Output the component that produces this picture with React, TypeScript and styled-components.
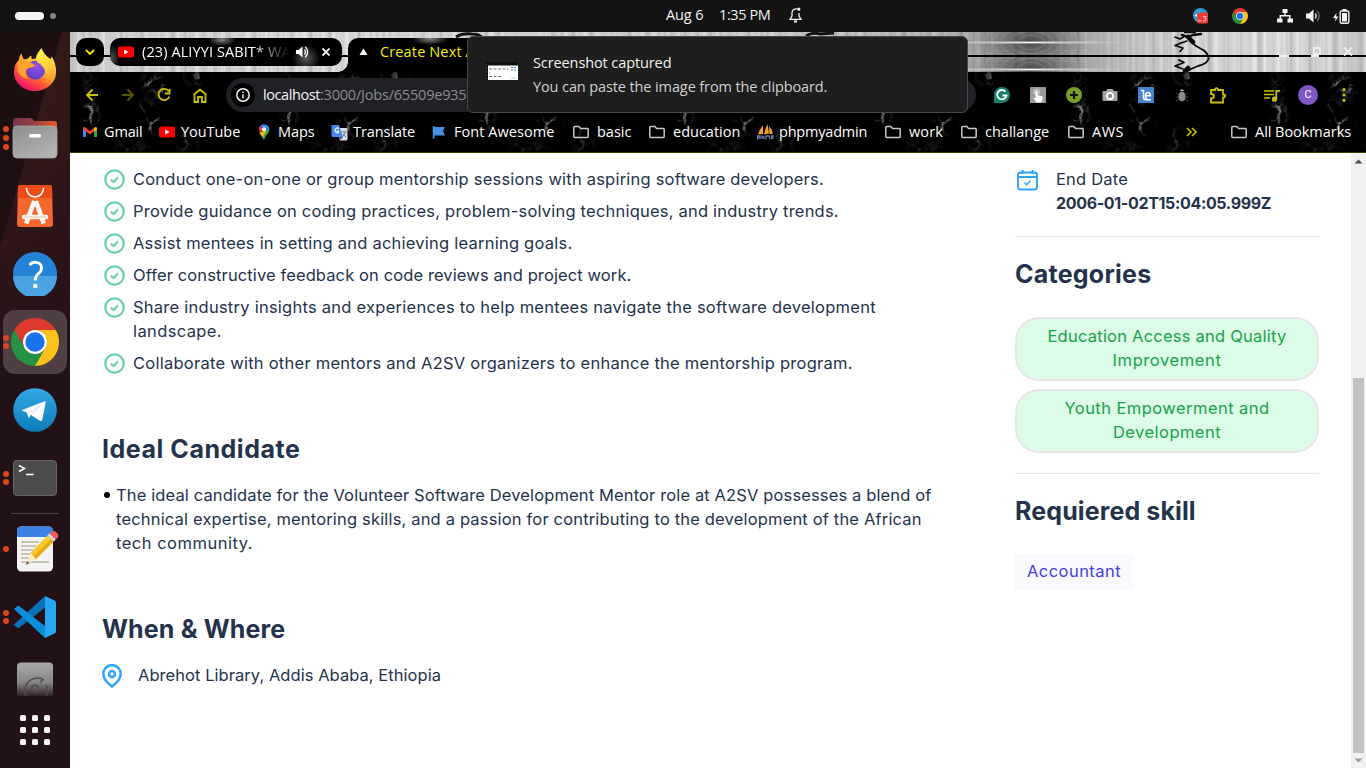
import React from 'react';
import styled, { createGlobalStyle } from 'styled-components';

const UI = '"Open Sans", "Noto Sans", sans-serif';
const BODY = 'Inter, "Open Sans", sans-serif';
const YELLOW = '#c9c000';

const GlobalStyle = createGlobalStyle`
  *, *::before, *::after { box-sizing: border-box; }
  body { margin: 0; overflow: hidden; background: #131313; }
  ul, p, h2 { margin: 0; padding: 0; }
  svg { display: block; flex: none; }
`;

const Desktop = styled.div`
  width: 1366px;
  height: 768px;
  display: flex;
  flex-direction: column;
  position: relative;
  overflow: hidden;
  font-family: ${UI};
`;

/* ---------- system bar ---------- */

const SystemBar = styled.header`
  flex: none;
  height: 32px;
  display: flex;
  align-items: center;
  background: #131313;
  color: #f2f2f2;
  font-size: 14.5px;
`;
const Workspaces = styled.div`
  display: flex;
  align-items: center;
  gap: 6px;
  width: 666px;
  padding-left: 15px;
`;
const ActiveWorkspace = styled.span`
  width: 29px;
  height: 8px;
  border-radius: 4px;
  background: #f4f4f4;
`;
const IdleWorkspace = styled.span`
  width: 6px;
  height: 6px;
  border-radius: 50%;
  background: #858585;
`;
const Clock = styled.div`
  display: flex;
  align-items: center;
  width: 527px;
  line-height: 20px;
  padding-bottom: 2px;
`;
const ClockPart = styled.span<{ $width: number; $track: number }>`
  width: ${p => p.$width}px;
  letter-spacing: ${p => p.$track}px;
  white-space: nowrap;
`;
const Tray = styled.div`
  display: flex;
  align-items: center;
`;
const TrayItem = styled.span<{ $after: number }>`
  display: flex;
  margin-right: ${p => p.$after}px;
`;

/* ---------- dock ---------- */

const Workarea = styled.div`
  flex: 1;
  display: flex;
  min-height: 0;
`;
const DockPanel = styled.nav`
  flex: none;
  width: 70px;
  display: flex;
  flex-direction: column;
  padding-top: 4px;
  background:
    linear-gradient(180deg, rgba(35, 17, 24, 0) 0, rgba(35, 17, 24, 0) 90px, #231118 380px),
    linear-gradient(106deg, #1b0f10 0, #1b0f10 59px, #351919 60px, #2c1517 100%) 0 0 / 70px 300px no-repeat,
    #231118;
`;
const DockSlot = styled.div<{ $height?: number }>`
  position: relative;
  flex: none;
  height: ${p => p.$height ?? 68}px;
  display: flex;
  align-items: center;
  justify-content: center;
`;
const FocusTile = styled.div`
  width: 64px;
  height: 64px;
  border-radius: 12px;
  display: flex;
  align-items: center;
  justify-content: center;
  background: #4f3e42;
`;
const RunningDots = styled.div`
  position: absolute;
  left: 3px;
  top: 0;
  bottom: 0;
  display: flex;
  flex-direction: column;
  justify-content: center;
  gap: 2.7px;
`;
const RunningDot = styled.i`
  width: 6px;
  height: 6px;
  border-radius: 50%;
  background: #d8481a;
`;
const DockRule = styled.div`
  flex: none;
  height: 1px;
  margin: 1px 11px;
  background: #4d4145;
`;
const AppGrid = styled.div`
  margin: 8px auto 0;
  display: grid;
  grid-template-columns: repeat(3, 6px);
  grid-auto-rows: 6px;
  gap: 6px;
`;
const AppGridCell = styled.i`
  background: #f5f3f4;
  border-radius: 1.5px;
`;

/* ---------- browser chrome ---------- */

const Browser = styled.section`
  flex: 1;
  min-width: 0;
  display: flex;
  flex-direction: column;
`;
const BrowserHead = styled.div`
  position: relative;
  flex: none;
  height: 121px;
  background: #000;
  border-bottom: 1px solid #3c3a00;
  color: #fff;
  font-size: 14.5px;
`;
const Backdrop = styled.div`
  position: absolute;
  inset: 0;
`;
const HeadRows = styled.div`
  position: relative;
`;
const TabStrip = styled.div`
  height: 40px;
  display: flex;
  padding: 6px 13px 0 6px;
`;
const TabSearch = styled.div`
  width: 28px;
  height: 28px;
  border-radius: 10px;
  margin-right: 6px;
  display: flex;
  align-items: center;
  justify-content: center;
  background: #000;
`;
const Tab = styled.div`
  width: 232px;
  height: 28px;
  border-radius: 10px;
  display: flex;
  align-items: center;
  padding-left: 8px;
  background:
    radial-gradient(ellipse 14px 6px at 112px 2px, rgba(255, 255, 255, 0.5), transparent),
    radial-gradient(ellipse 14px 14px at 196px 20px, rgba(255, 255, 255, 0.35), transparent),
    radial-gradient(ellipse 8px 14px at 2px 20px, rgba(255, 255, 255, 0.3), transparent),
    #000;
`;
const TabTitle = styled.span<{ $width: number; $track: number }>`
  width: ${p => p.$width}px;
  margin: 0 6px 0 8px;
  white-space: nowrap;
  letter-spacing: ${p => p.$track}px;
  line-height: 20px;
  -webkit-mask-image: linear-gradient(90deg, #000 74%, transparent 100%);
`;
const TabClose = styled.span`
  margin-left: 13px;
`;
const ActiveTab = styled.div`
  position: relative;
  width: 240px;
  height: 34px;
  margin-left: 6px;
  border-radius: 10px 10px 0 0;
  display: flex;
  padding: 4px 0 0 11px;
  color: #f4f000;
  line-height: 20px;
  letter-spacing: 0.14px;
  white-space: nowrap;
  background: radial-gradient(ellipse 18px 6px at 82px 1px, rgba(255, 255, 255, 0.5), transparent), #000;
  &::before {
    content: '';
    position: absolute;
    left: -10px;
    bottom: 0;
    width: 10px;
    height: 10px;
    background: radial-gradient(circle at 0 0, transparent 9.5px, #000 10px);
  }
`;
const TabMark = styled.span`
  width: 21px;
  padding-top: 6px;
`;
const WindowButtons = styled.div`
  margin-left: auto;
  display: flex;
  gap: 22px;
  padding-top: 8px;
`;
const Toolbar = styled.div`
  height: 46px;
  display: flex;
  align-items: center;
  padding-left: 4px;
`;
const ToolSlot = styled.span<{ $before?: number }>`
  width: 36px;
  margin-left: ${p => p.$before ?? 0}px;
  display: flex;
  justify-content: center;
`;
const Omnibox = styled.div`
  width: 750px;
  height: 34px;
  margin: 0 8px;
  border-radius: 17px;
  background: #202126;
  display: flex;
  align-items: center;
  padding-left: 5px;
`;
const SiteInfo = styled.span`
  width: 24px;
  height: 24px;
  border-radius: 50%;
  background: #000;
  margin-right: 8px;
  display: flex;
  align-items: center;
  justify-content: center;
`;
const UrlPart = styled.span<{ $dim?: boolean; $track: number }>`
  color: ${p => (p.$dim ? '#8b8c90' : '#f4f4f4')};
  letter-spacing: ${p => p.$track}px;
  padding-bottom: 1px;
`;
const Avatar = styled.span`
  width: 20px;
  height: 20px;
  border-radius: 50%;
  background: #7e57c2;
  color: #fff;
  font: 11px/20px Roboto, sans-serif;
  text-align: center;
`;
const BookmarkBar = styled.div`
  height: 34px;
  display: flex;
  align-items: center;
  padding: 0 0 6px 12px;
`;
const Bookmark = styled.span<{ $width: number; $icon: number; $track: number }>`
  flex: none;
  width: ${p => p.$width}px;
  display: grid;
  grid-template-columns: ${p => p.$icon}px auto;
  align-items: center;
  line-height: 20px;
  letter-spacing: ${p => p.$track}px;
  white-space: nowrap;
`;

/* ---------- notification ---------- */

const Toast = styled.aside`
  position: absolute;
  left: 467px;
  top: 36px;
  width: 501px;
  height: 77px;
  border: 1px solid #484848;
  border-radius: 6px;
  background: #1e1e1e;
  display: flex;
  align-items: flex-start;
  padding: 14px 0 0 18px;
  gap: 15px;
  font-size: 14.5px;
  line-height: 24px;
  svg { margin-top: 11px; }
`;
const ToastTitle = styled.div`
  color: #f0f0f0;
  letter-spacing: -0.1px;
`;
const ToastText = styled.div`
  color: #d0d0d0;
  letter-spacing: -0.11px;
`;

/* ---------- page ---------- */

const Viewport = styled.div`
  flex: 1;
  min-height: 0;
  display: flex;
  background: #fff;
  font-family: ${BODY};
  font-size: 16.5px;
  line-height: 24px;
  color: #25324b;
`;
const Page = styled.main`
  width: 1281px;
  display: flex;
  padding: 14px 32px 0;
`;
const Article = styled.article`
  width: 913px;
`;
const Heading = styled.h2<{ $track: number; $top: number }>`
  margin-top: ${p => p.$top}px;
  padding-bottom: 1px;
  font-size: 25px;
  line-height: 32px;
  font-weight: 700;
  letter-spacing: ${p => p.$track}px;
`;
const TaskList = styled.ul`
  list-style: none;
  display: flex;
  flex-direction: column;
  gap: 8px;
`;
const Task = styled.li`
  display: flex;
  gap: 8px;
  padding-left: 2px;
  svg { margin-top: 2px; }
`;
const Line = styled.span<{ $track: number }>`
  display: block;
  white-space: nowrap;
  letter-spacing: ${p => p.$track}px;
`;
const Candidate = styled.div`
  display: flex;
  margin-top: 17px;
`;
const Bullet = styled.i`
  width: 6px;
  height: 6px;
  margin: 9px 6px 0 2px;
  border-radius: 50%;
  background: #000;
`;
const Place = styled.div`
  display: flex;
  gap: 16px;
  margin-top: 17px;
  svg { margin-top: 1px; }
`;
const Sidebar = styled.aside`
  width: 304px;
`;
const DateRow = styled.div`
  display: flex;
  gap: 17px;
  padding: 0 0 21px 1px;
  border-bottom: 1px solid #e5e7eb;
  svg { margin-top: 1px; }
`;
const Strong = styled(Line)`
  font-size: 16px;
  font-weight: 700;
`;
const Categories = styled.div`
  display: flex;
  flex-direction: column;
  gap: 8px;
  margin-top: 26px;
  padding-bottom: 20px;
  border-bottom: 1px solid #e5e7eb;
`;
const Pill = styled.div`
  padding: 5px 0 7px;
  border: 2px solid #e5e7eb;
  border-radius: 24px;
  background: #dcfce7;
  color: #16a34a;
  text-align: center;
`;
const Skill = styled.span`
  display: inline-block;
  width: 118px;
  margin-top: 26px;
  padding: 5px 12px 7px;
  background: #f8f8fd;
  color: #4640de;
`;
const Scrollbar = styled.div`
  width: 15px;
  background: #f1f1f1;
  display: flex;
  flex-direction: column;
  align-items: center;
  padding: 6px 1px 5px 0;
`;
const Thumb = styled.div`
  width: 11px;
  height: 375px;
  margin: 214px 0 5px;
  background: #c1c1c1;
`;

/* ---------- icons ---------- */

const ChromeIcon = ({ size }: { size: number }) => (
  <svg width={size} height={size} viewBox="0 0 48 48">
    <path fill="#db3a2d" d="M24 12H44.78A24 24 0 0 0 3.22 12L13.6 30A12 12 0 0 1 24 12Z" />
    <path fill="#259343" d="M34.39 30L24 48A24 24 0 0 1 3.22 12L13.6 30A12 12 0 0 0 34.39 30Z" />
    <path fill="#fcc21b" d="M24 12H44.78A24 24 0 0 1 24 48L34.39 30A12 12 0 0 0 24 12Z" />
    <circle cx="24" cy="24" r="12" fill="#fff" />
    <circle cx="24" cy="24" r="9.7" fill="#1a73e8" />
  </svg>
);

const YouTubeIcon = () => (
  <svg width="16" height="16" viewBox="0 0 16 16">
    <rect y="2.5" width="16" height="11" rx="2.6" fill="#f00" />
    <path d="M6.2 5.6v4.8L10.5 8z" fill="#fff" />
  </svg>
);

const FolderIcon = () => (
  <svg width="16" height="14" viewBox="0 0 16 14" fill="none" stroke="#c8c8c8" strokeWidth="1.5">
    <path d="M1.6 1.6H5.8L7.6 3.6H14.4Q15.2 3.6 15.2 4.4V11.6Q15.2 12.4 14.4 12.4H1.6Q.8 12.4.8 11.6V2.4Q.8 1.6 1.6 1.6Z" />
  </svg>
);

const FirefoxIcon = () => (
  <svg width="44" height="44" viewBox="0 0 44 44">
    <defs>
      <linearGradient id="ffBody" x1=".8" y1=".1" x2=".25" y2=".95">
        <stop offset="0" stopColor="#fff14a" />
        <stop offset=".38" stopColor="#ffb02e" />
        <stop offset=".65" stopColor="#ff5a36" />
        <stop offset="1" stopColor="#ee0f70" />
      </linearGradient>
      <radialGradient id="ffGlobe" cx=".55" cy=".3" r=".8">
        <stop offset="0" stopColor="#a04de8" />
        <stop offset=".6" stopColor="#6f45d4" />
        <stop offset="1" stopColor="#4f3bb5" />
      </radialGradient>
      <linearGradient id="ffTail" x1=".5" y1="0" x2=".6" y2="1">
        <stop offset="0" stopColor="#fff44f" />
        <stop offset=".6" stopColor="#ffc83a" />
        <stop offset="1" stopColor="#ff8a2c" />
      </linearGradient>
    </defs>
    <path fill="url(#ffBody)" d="M6 12Q6 8 8.500 5.500Q9 9.500 11 11.500L15 10.500Q17 8 18.500 7.500Q18 10 19 11L32 9Q43 13 43 25A21 18.500 0 0 1 1 24Q1 16 6 12Z" />
    <circle cx="22.5" cy="22" r="9.5" fill="url(#ffGlobe)" />
    <path fill="url(#ffTail)" d="M28.500 0Q31 7 37.500 11Q39 9 38.500 8Q43 15 43 24Q41 33 32 35Q35 29 32 23Q30 17 24.500 14.500Q20 10 28.500 0Z" />
    <path fill="#ffa22c" d="M6 12Q6 8 8.500 5.500Q9 9.500 11 12Q15 12.500 18 14.500L22.500 17.500Q20 19.500 16 20Q12.500 21 12.500 25Q13 29 16 31.500Q8 30 5 24Q4 17 6 12Z" />
  </svg>
);

const FilesIcon = () => (
  <svg width="46" height="42" viewBox="0 0 46 42">
    <defs>
      <linearGradient id="fdBack"><stop offset="0" stopColor="#76304f" /><stop offset=".5" stopColor="#97403f" /><stop offset="1" stopColor="#e9591f" /></linearGradient>
      <linearGradient id="fdFront" y2="1" x2=".7"><stop offset="0" stopColor="#8d8d8d" /><stop offset="1" stopColor="#b3b3b3" /></linearGradient>
    </defs>
    <path fill="url(#fdBack)" d="M1 4Q1 1 4 1H18Q20 1 21 2.500L22 4H42Q45 4 45 7V20H1Z" />
    <rect x="1" y="9" width="44" height="32" rx="4" fill="url(#fdFront)" stroke="#a9a9a9" strokeWidth=".8" />
    <rect x="17" y="17" width="12" height="3.5" rx="1.5" fill="#fff" />
  </svg>
);

const SoftwareIcon = () => (
  <svg width="36" height="42" viewBox="0 0 36 42">
    <path fill="#f4672f" d="M3.500 0H32.500Q35 0 35 2.500L36 39Q36 42 33 42H3Q0 42 0 39L1 2.500Q1 0 3.500 0Z" />
    <path fill="#ed4b17" d="M3.500 0H32.500Q35 0 35 2.500L35.300 13H.7L1 2.500Q1 0 3.500 0Z" />
    <path d="M9.500 3A8.500 9 0 0 0 26.500 3" fill="none" stroke="#fff" strokeWidth="1.5" />
    <g stroke="#fff8f4" fill="none">
      <path d="M17.300 16L9.200 38.500M18.800 16L26.800 38.500" strokeWidth="4.6" />
      <path d="M7 32H29" strokeWidth="4.5" strokeLinecap="round" />
      <path d="M7 32H29" strokeWidth="1" stroke="#f4b8a0" />
    </g>
  </svg>
);

const HelpIcon = () => (
  <svg width="44" height="44" viewBox="0 0 44 44">
    <circle cx="22" cy="22" r="22" fill="#2383d6" />
    <path d="M0 24A22 22 0 0 0 44 24Z" fill="#4aa3e2" />
    <path d="M16.500 13Q19 10 23 10.300Q28.500 11 28.500 16Q28.500 19.500 25 22Q22 24.500 22.300 28.500" fill="none" stroke="#fff" strokeWidth="2.8" />
    <circle cx="22.3" cy="34" r="2.3" fill="#fff" />
  </svg>
);

const TelegramIcon = ({ size }: { size: number }) => (
  <svg width={size} height={size} viewBox="0 0 44 44">
    <defs><linearGradient id="tg" x2="0" y2="1"><stop offset="0" stopColor="#34a8e4" /><stop offset="1" stopColor="#0c7dba" /></linearGradient></defs>
    <circle cx="22" cy="22" r="21.8" fill="url(#tg)" />
    <path fill="#fff" d="M8.500 22.300L31 13.400Q33 13 32.600 15L29.300 31.500Q28.800 33.800 26.800 32.800L17.600 26.800L16 30.500L13.800 24.600Z" />
    <path d="M15.500 25L28 17L18.500 26.500" fill="none" stroke="#c9dff0" strokeWidth=".8" />
  </svg>
);

const TerminalIcon = () => (
  <svg width="44" height="36" viewBox="0 0 44 36">
    <rect x=".5" y=".5" width="43" height="35" rx="3.5" fill="#4c4c4c" stroke="#666" />
    <path d="M6 5.500L11.500 8.500L6 11.500M13 14.500H20.500" fill="none" stroke="#fff" strokeWidth="1.5" />
  </svg>
);

const EditorIcon = () => (
  <svg width="46" height="46" viewBox="-1 0 46 46" overflow="visible">
    <rect x="4" y=".5" width="36" height="45" rx="4.5" fill="#f3f3f2" />
    <path fill="#3a82e4" d="M4 5Q4 .5 8.500 .5H35.500Q40 .5 40 5V11H4Z" />
    <path d="M8 16H26M8 20H23M8 24H20M8 28H18M8 32H16M8 36H36" stroke="#c8c4b8" strokeWidth="1.9" />
    <path fill="#f9c62c" d="M36 8L42 14L22 34L16 28.500Z" />
    <path fill="#e5ac12" d="M39.500 11.500L42 14L22 34L19.500 31.500Z" />
    <path fill="#ffefc4" d="M17.500 27L23 33L13 38.500Z" />
    <path fill="#555" d="M14.500 35L16.500 37L12.500 39Z" />
    <path fill="#f25c62" d="M36 8Q40 3 43.500 6.500Q48 10 42 14Z" />
    <path fill="#cfd6da" d="M34.500 9.500L36.500 7.500L42.500 13.500L40.500 15.500Z" />
  </svg>
);

const VsCodeIcon = () => (
  <svg width="42" height="42" viewBox="0 0 42 42">
    <path fill="#0872b8" d="M0 28.500L31 0V11.500L5 32Q4 32.500 3 31.600L.3 29.500Z" />
    <path fill="#0a8fdb" d="M0 13L3.500 10Q4.500 9.500 5.500 10.300L31 30V42Z" />
    <path fill="#27a6f2" d="M31 0L40.500 4.500Q42 5.300 42 7V35Q42 36.700 40.500 37.500L31 42Z" />
  </svg>
);

const DiskIcon = () => (
  <svg width="36" height="34" viewBox="0 0 36 34">
    <defs><linearGradient id="dk" x2="0" y2="1"><stop offset="0" stopColor="#aaa" /><stop offset=".6" stopColor="#858585" /><stop offset="1" stopColor="#2f2125" /></linearGradient></defs>
    <path fill="url(#dk)" d="M0 34V4Q0 .5 4 .5H32Q36 .5 36 4V34Z" />
    <g fill="none" stroke="#514b4d" strokeWidth="1.5">
      <path d="M9 34A12.500 12.500 0 0 1 26 17.500L23 20.500M29 23Q32 28 29 34" />
      <circle cx="18" cy="26.5" r="3.3" />
    </g>
  </svg>
);

const CheckIcon = () => (
  <svg width="21" height="21" viewBox="0 0 21 21" fill="none" stroke="#69cfac">
    <circle cx="10.5" cy="10.5" r="9.2" strokeWidth="2.2" />
    <path d="M6.800 10.500L9.500 13L14.200 8.300" strokeWidth="2.2" />
  </svg>
);

const PinIcon = () => (
  <svg width="20" height="24" viewBox="0 0 20 24" fill="none" stroke="#2fa4f7" strokeWidth="2.5">
    <path d="M10 22.500Q1.300 16 1.300 9.700A8.700 8.500 0 0 1 18.700 9.700Q18.700 16 10 22.500Z" />
    <circle cx="10" cy="10" r="3" />
  </svg>
);

const CalendarIcon = () => (
  <svg width="23" height="24" viewBox="0 0 23 24" fill="none" stroke="#2fa4f7" strokeWidth="1.9">
    <rect x="2" y="4.5" width="19" height="17" rx="2.5" />
    <path d="M2 9H21M6.500 2V6M16.500 2V6" />
    <path d="M8.500 14.500L10.700 16.700L14.500 12.700" strokeWidth="1.6" />
  </svg>
);

const Smoke = () => (
  <svg width="1296" height="120" viewBox="0 0 1296 120">
    <defs>
      <filter id="wisp" filterUnits="userSpaceOnUse" x="0" y="0" width="198" height="125" colorInterpolationFilters="sRGB">
        <feGaussianBlur in="SourceGraphic" stdDeviation="3.5" result="soft" />
        <feTurbulence type="turbulence" baseFrequency=".07" numOctaves="5" seed="4" />
        <feColorMatrix values="0 0 0 0 1  0 0 0 0 1  0 0 0 0 1  -3.2 0 0 0 1" result="veins" />
        <feComposite in="veins" in2="soft" operator="in" />
        <feGaussianBlur stdDeviation=".5" />
      </filter>
      <pattern id="smoke" width="198" height="125" patternUnits="userSpaceOnUse" y="32">
        <g filter="url(#wisp)" fill="#fff">
          <ellipse cx="20" cy="20" rx="4" ry="12" opacity=".3" />
          <ellipse cx="21" cy="50" rx="4.5" ry="13" />
          <ellipse cx="82" cy="19" rx="9" ry="6" opacity=".75" />
          <ellipse cx="91" cy="27" rx="5" ry="6" opacity=".6" />
          <ellipse cx="83" cy="61" rx="10" ry="7" opacity=".75" />
          <ellipse cx="126" cy="10" rx="10" ry="9" opacity=".6" />
          <ellipse cx="76" cy="43" rx="6" ry="8" opacity=".35" />
          <ellipse cx="118" cy="78" rx="9" ry="14" opacity=".25" />
          <ellipse cx="62" cy="84" rx="18" ry="4" opacity=".25" />
        </g>
      </pattern>
    </defs>
    <rect y="40" width="1296" height="80" fill="url(#smoke)" />
  </svg>
);

const Figure = () => (
  <g fill="none" stroke="#0a0a0a" strokeLinecap="round" strokeLinejoin="round">
    <path d="M1112 3L1118 5L1123 3L1131 2M1115 0L1125 0" strokeWidth="2.4" />
    <path d="M1105 5L1110 7L1115 4M1117 9L1111 11L1105 13.500L1113 16L1110 19.500" strokeWidth="1.6" />
    <path d="M1120 9L1126 14L1134 18.500Q1139 23 1138.500 27Q1137 32 1128 34L1121 37L1116 40" strokeWidth="1.8" />
    <path d="M1118 5L1123 10M1118 36L1115 39" strokeWidth="4.5" />
    <path d="M1109 28L1114 30.500L1105 34L1113 37" strokeWidth="1.8" />
  </g>
);

const BrushedMetal = () => (
  <svg width="1296" height="40" viewBox="0 0 1296 40">
    <defs>
      <linearGradient id="steel">
        <stop offset="0" stopColor="#dadada" />
        <stop offset=".2" stopColor="#e4e4e4" />
        <stop offset=".55" stopColor="#d4d4d4" />
        <stop offset=".67" stopColor="#bcbcbc" />
        <stop offset=".74" stopColor="#979797" />
        <stop offset=".81" stopColor="#c8c8c8" />
        <stop offset=".87" stopColor="#e0e0e0" />
        <stop offset=".93" stopColor="#e6e6e6" />
        <stop offset="1" stopColor="#d6d6d6" />
      </linearGradient>
      <filter id="brush" x="0" y="0" width="100%" height="100%" colorInterpolationFilters="sRGB">
        <feTurbulence type="fractalNoise" baseFrequency=".16 .0005" numOctaves="3" seed="7" />
        <feColorMatrix values="0 0 0 0 0  0 0 0 0 0  0 0 0 0 0  .42 0 0 0 -.14" />
      </filter>
      <radialGradient id="core"><stop offset="0" stopColor="#333" stopOpacity=".75" /><stop offset="1" stopColor="#555" stopOpacity="0" /></radialGradient>
      <radialGradient id="glint"><stop offset="0" stopColor="#fff" /><stop offset=".3" stopColor="#fff" stopOpacity=".6" /><stop offset="1" stopColor="#fff" stopOpacity="0" /></radialGradient>
      <clipPath id="upper"><rect width="1296" height="23" /></clipPath>
      <clipPath id="lower"><rect y="25" width="1296" height="15" /></clipPath>
    </defs>
    <rect width="1296" height="40" fill="url(#steel)" />
    <rect width="1296" height="40" filter="url(#brush)" />
    {[{ clip: 'upper', y: 10.5 }, { clip: 'lower', y: 37.5 }].map(({ clip, y }) => (
      <g key={clip} clipPath={`url(#${clip})`}>
        <ellipse cx="961" cy={y} rx="62" ry="26" fill="url(#core)" />
        {[14, 22, 30, 38, 47, 56, 66, 76, 88, 100].map(r => (
          <ellipse key={r} cx="961" cy={y} rx={r} ry={r * 0.5} fill="none" stroke="#eee" strokeWidth="1" opacity=".16" />
        ))}
        <ellipse cx="961" cy={y} rx="100" ry="1.8" fill="url(#glint)" />
      </g>
    ))}
    <rect y="23" width="1296" height="2" fill="#000" />
    <Figure />
    <path d="M386 5Q392 1 402 2Q410 2 412 6M736 4Q742 0 750 2L764 1" fill="none" stroke="#111" strokeWidth="3" />
  </svg>
);

/* ---------- data ---------- */

const tasks: { text: string; track: number }[][] = [
  [{ text: 'Conduct one-on-one or group mentorship sessions with aspiring software developers.', track: 0.21 }],
  [{ text: 'Provide guidance on coding practices, problem-solving techniques, and industry trends.', track: 0.21 }],
  [{ text: 'Assist mentees in setting and achieving learning goals.', track: 0.23 }],
  [{ text: 'Offer constructive feedback on code reviews and project work.', track: 0.11 }],
  [
    { text: 'Share industry insights and experiences to help mentees navigate the software development', track: 0.25 },
    { text: 'landscape.', track: 0.38 },
  ],
  [{ text: 'Collaborate with other mentors and A2SV organizers to enhance the mentorship program.', track: 0.25 }],
];

const GmailIcon = () => (
  <svg width="16" height="16" viewBox="0 0 16 16">
    <path fill="#4285f4" d="M1 4V13H4V7L1 4Z" />
    <path fill="#34a853" d="M15 4V13H12V7L15 4Z" />
    <path fill="#ea4335" d="M1 4Q2 2 4 4L8 7L12 4V7.500L8 10.600L4 7.500L1 5Z" />
    <path fill="#fbbc04" d="M12 4Q14 2 15 4V5.500L12 7.600Z" />
  </svg>
);
const MapsIcon = () => (
  <svg width="16" height="16" viewBox="0 0 16 16">
    <path fill="#34a853" d="M3.500 9L8 16Q9 12 12 9.500Q14 7 13 3.500Z" />
    <path fill="#fbbc04" d="M3.200 8.500L10 7L7 13.500Q5 11 3.200 8.500Z" />
    <path fill="#ea4335" d="M4 2L8 5L5 9Q1.500 5 4 2Z" />
    <path fill="#4285f4" d="M4 2Q8-1.500 12 2Q14 4 13 6L9 5Z" />
    <circle cx="8" cy="5.3" r="2" fill="#fff" />
  </svg>
);
const TranslateIcon = () => (
  <svg width="17" height="17" viewBox="0 0 17 17">
    <path fill="#d9dce0" d="M6 4H15.500L16.500 5V15.500L15.500 16.500H9Z" />
    <path fill="#4a89f3" d="M.5 1H8L12 13H1.500L.5 12Z" />
    <path d="M8 4.500A2.400 2.400 0 1 0 7.500 8.500V7H5.500" fill="none" stroke="#fff" strokeWidth="1.1" />
    <path d="M10.500 8H15.500M13 7V8M11 13Q14 11 14.500 8M12 10L15 13" fill="none" stroke="#65788a" strokeWidth=".9" />
    <path fill="#3256b4" d="M8.500 13H12L9.500 16Z" />
  </svg>
);
const FlagIcon = () => (
  <svg width="14" height="14" viewBox="0 0 14 14">
    <path fill="#4a90e2" d="M.7 1H2.500V2H13L11 6L13 10.500H2.500V13.500H.7Z" />
  </svg>
);
const SailIcon = () => (
  <svg width="17" height="16" viewBox="0 0 17 16">
    <path fill="#f89c2a" d="M6 1Q2 6 1 10.500L6 10ZM10.500 0Q8 5 7 10.500L12 9.500ZM12 2Q16 6 15.500 10L12.500 10Z" />
    <path d="M.5 15.500V12H3V14H.5M5 15V11.500M5 13H7V15M9 15.500V12H12L13 15M14.500 15V12H16V15" fill="none" stroke="#6c78af" strokeWidth="1.3" />
  </svg>
);
const MoreIcon = () => (
  <svg width="11" height="10" viewBox="0 0 11 10" fill="none" stroke={YELLOW} strokeWidth="1.6">
    <path d="M1 1L5 5L1 9M6 1L10 5L6 9" />
  </svg>
);

const bookmarks: { name: string; icon: React.ReactNode; width: number; gutter: number; track: number }[] = [
  { name: 'Gmail', icon: <GmailIcon />, width: 77, gutter: 22, track: -0.15 },
  { name: 'YouTube', icon: <YouTubeIcon />, width: 97, gutter: 22, track: -0.05 },
  { name: 'Maps', icon: <MapsIcon />, width: 75, gutter: 22, track: -0.1 },
  { name: 'Translate', icon: <TranslateIcon />, width: 101, gutter: 22, track: -0.07 },
  { name: 'Font Awesome', icon: <FlagIcon />, width: 141, gutter: 22, track: 0.05 },
  { name: 'basic', icon: <FolderIcon />, width: 76, gutter: 24, track: 0 },
  { name: 'education', icon: <FolderIcon />, width: 108, gutter: 24, track: 0 },
  { name: 'phpmyadmin', icon: <SailIcon />, width: 128, gutter: 22, track: -0.2 },
  { name: 'work', icon: <FolderIcon />, width: 76, gutter: 24, track: 0.1 },
  { name: 'challange', icon: <FolderIcon />, width: 107, gutter: 24, track: 0 },
  { name: 'AWS', icon: <FolderIcon />, width: 118, gutter: 24, track: 0.5 },
  { name: '', icon: <MoreIcon />, width: 45, gutter: 24, track: 0 },
  { name: 'All Bookmarks', icon: <FolderIcon />, width: 130, gutter: 24, track: -0.04 },
];

const Running = ({ count }: { count: number }) => (
  <RunningDots>{Array.from({ length: count }, (_, i) => <RunningDot key={i} />)}</RunningDots>
);

const Dock = () => (
  <DockPanel>
    <DockSlot><FirefoxIcon /></DockSlot>
    <DockSlot><Running count={3} /><FilesIcon /></DockSlot>
    <DockSlot><SoftwareIcon /></DockSlot>
    <DockSlot><HelpIcon /></DockSlot>
    <DockSlot><FocusTile><ChromeIcon size={48} /></FocusTile><Running count={2} /></DockSlot>
    <DockSlot><TelegramIcon size={44} /></DockSlot>
    <DockSlot><Running count={2} /><TerminalIcon /></DockSlot>
    <DockRule />
    <DockSlot><Running count={1} /><EditorIcon /></DockSlot>
    <DockSlot><Running count={2} /><VsCodeIcon /></DockSlot>
    <DockSlot $height={56}><DiskIcon /></DockSlot>
    <AppGrid>{Array.from({ length: 9 }, (_, i) => <AppGridCell key={i} />)}</AppGrid>
  </DockPanel>
);

const line = { fill: 'none', stroke: YELLOW, strokeWidth: 1.8 };

const BrowserToolbar = () => (
  <Toolbar>
    <ToolSlot><svg width="14" height="14" viewBox="0 0 14 14" {...line}><path d="M13 7H2M7.500 1.500L2 7L7.500 12.500" /></svg></ToolSlot>
    <ToolSlot><svg width="14" height="14" viewBox="0 0 14 14" {...line} stroke="#5a5600"><path d="M1 7H12M6.500 1.500L12 7L6.500 12.500" /></svg></ToolSlot>
    <ToolSlot><svg width="14" height="14" viewBox="0 0 14 14" {...line}><path d="M11.700 3.200A5.600 5.600 0 1 0 12.400 8.500M12.600 .8V5.500H8" /></svg></ToolSlot>
    <ToolSlot><svg width="14" height="15" viewBox="0 0 14 15" {...line}><path d="M1.500 6L7 1.700L12.500 6V14H9V9H5V14H1.500Z" /></svg></ToolSlot>
    <Omnibox>
      <SiteInfo>
        <svg width="14" height="14" viewBox="0 0 14 14" fill="none" stroke="#f1f1f1" strokeWidth="1.5"><circle cx="7" cy="7" r="6.2" /><path d="M7 6.200V10.300M7 3.500V5" /></svg>
      </SiteInfo>
      <UrlPart $track={-0.42}>localhost</UrlPart>
      <UrlPart $dim $track={-0.2}>:3000/Jobs/65509e935</UrlPart>
    </Omnibox>
    <ToolSlot>
      <svg width="16" height="16" viewBox="0 0 16 16"><path fill="#15826c" d="M8 0A8 8 0 0 1 8 16H0V8A8 8 0 0 1 8 0Z" /><path d="M11.500 4.700A4.700 4.700 0 1 0 12.500 8.500H8.500" fill="none" stroke="#fff" strokeWidth="1.8" /></svg>
    </ToolSlot>
    <ToolSlot>
      <svg width="16" height="16" viewBox="0 0 16 16"><rect width="16" height="16" rx="1" fill="#9b9b9b" /><circle cx="6.5" cy="5" r="3.5" fill="#bdbdbd" /><path fill="#fff" d="M5.500 4.500Q6.500 3 7.500 4.500V8L12.500 9.500V13L11 15.500H6.500L3 10.500L5.500 11Z" /></svg>
    </ToolSlot>
    <ToolSlot>
      <svg width="16" height="16" viewBox="0 0 16 16"><circle cx="8" cy="8" r="8" fill="#779e26" /><path d="M8 4V12M4 8H12" stroke="#111" strokeWidth="2.2" /></svg>
    </ToolSlot>
    <ToolSlot>
      <svg width="16" height="14" viewBox="0 0 16 14"><path fill="#a4a4a4" d="M1 3H4L5.500 1H10.500L12 3H15Q15.500 3 15.500 3.500V12Q15.500 13 14.500 13H1.500Q.5 13 .5 12V3.500Q.5 3 1 3Z" /><circle cx="8" cy="8" r="3" fill="none" stroke="#fff" strokeWidth="1.8" /><circle cx="8" cy="8" r="2" fill="#888" /></svg>
    </ToolSlot>
    <ToolSlot>
      <svg width="16" height="16" viewBox="0 0 16 16"><rect width="16" height="16" fill="#4585cf" /><path d="M3 3.500H5.500V10.500Q5.500 12.700 8 12.700H13M8 8.700H12.300Q12.300 5.500 10 5.500Q7.500 5.700 7.500 9Q7.500 12.500 10.500 12.600" fill="none" stroke="#fff" strokeWidth="1.5" /></svg>
    </ToolSlot>
    <ToolSlot>
      <svg width="14" height="14" viewBox="0 0 14 14"><ellipse cx="7" cy="8.5" rx="3.6" ry="5" fill="#8a8a8a" /><path fill="#b0b0b0" d="M4.500 3Q7-.5 9.500 3Z" /><path d="M1 5L4 7M13 5L10 7M.5 9H3.500M13.500 9H10.500M1 13L4 11M13 13L10 11" stroke="#444" /></svg>
    </ToolSlot>
    <ToolSlot>
      <svg width="18" height="17" viewBox="0 0 18 17" {...line}><path d="M2 3H6Q6 1.200 7.500 1.200T9 3H14V7.500Q16.200 7.500 16.200 9T14 10.500V15.500H2V11.500Q5 11.500 5 9.300T2 7Z" /></svg>
    </ToolSlot>
    <ToolSlot $before={18}>
      <svg width="16" height="13" viewBox="0 0 16 13"><path d="M0 2H10M0 5.500H10M0 9H6" stroke={YELLOW} strokeWidth="1.5" /><path d="M12.300 10V1.800H16" fill="none" stroke={YELLOW} strokeWidth="1.8" /><circle cx="10.5" cy="10.2" r="2.6" fill={YELLOW} /></svg>
    </ToolSlot>
    <ToolSlot><Avatar>C</Avatar></ToolSlot>
    <ToolSlot>
      <svg width="4" height="14" viewBox="0 0 4 14" fill={YELLOW}><circle cx="2" cy="1.7" r="1.6" /><circle cx="2" cy="7" r="1.6" /><circle cx="2" cy="12.3" r="1.6" /></svg>
    </ToolSlot>
  </Toolbar>
);

export default function App() {
  return (
    <Desktop>
      <GlobalStyle />
      <SystemBar>
        <Workspaces><ActiveWorkspace /><IdleWorkspace /></Workspaces>
        <Clock>
          <ClockPart $width={53} $track={-0.1}>Aug 6</ClockPart>
          <ClockPart $width={70} $track={-0.4}>1:35 PM</ClockPart>
          <svg width="13" height="16" viewBox="0 0 13 16" fill="none" stroke="#f2f2f2" strokeWidth="1.3">
            <path d="M8 2Q3.200 1.500 3 6V9L1 12.300H12L10 9V6" />
            <circle cx="9.8" cy="2.2" r="1" fill="#f2f2f2" />
            <path d="M5 14.500H8" strokeWidth="2" />
          </svg>
        </Clock>
        <Tray>
          <TrayItem $after={23}>
            <svg width="16" height="16" viewBox="0 0 16 16">
              <circle cx="7.5" cy="7.5" r="7.5" fill="#2b9fda" />
              <path d="M1.500 7.500L4 6V9Z" fill="#fff" />
              <rect x="4" y="4.5" width="11" height="11" rx="2" fill="#f23c34" />
              <path d="M5 12.800H8.500M10 8.500H13L11.500 10.300Q13.500 10.800 13 12.300Q12 13.500 10 12.800" fill="none" stroke="#ffd5d2" strokeWidth=".9" />
            </svg>
          </TrayItem>
          <TrayItem $after={29}><ChromeIcon size={16} /></TrayItem>
          <TrayItem $after={13}>
            <svg width="16" height="14" viewBox="0 0 16 14" fill="#f4f4f4">
              <path d="M5.500 0H10.500V4H8.700V6H13.500V9.500H16V13.500H10.500V9.500H12V7.500H4V9.500H5.500V13.500H0V9.500H2.500V6H7.300V4H5.500Z" />
            </svg>
          </TrayItem>
          <TrayItem $after={12}>
            <svg width="15" height="14" viewBox="0 0 15 14">
              <path fill="#f4f4f4" d="M0 4.500H3L7.500 .5V13.500L3 9.500H0Z" />
              <path d="M9.300 4.500Q11 7 9.300 9.500" stroke="#ddd" strokeWidth="1.4" fill="none" />
              <path d="M11.300 2Q15 7 11.300 12" stroke="#777" strokeWidth="1.2" fill="none" />
            </svg>
          </TrayItem>
          <TrayItem $after={0}>
            <svg width="17" height="15" viewBox="0 0 17 15">
              <path fill="#f4f4f4" d="M3.500 4L0 9H2.500L2 12.500L5.500 7.500H3Z" />
              <rect x="7.2" y="2" width="8.6" height="12.3" rx="1.5" fill="none" stroke="#f4f4f4" strokeWidth="1.4" />
              <rect x="9" y="4" width="5" height="8.5" fill="#f4f4f4" />
              <rect x="9.5" y="0" width="4" height="2" fill="#f4f4f4" />
            </svg>
          </TrayItem>
        </Tray>
      </SystemBar>
      <Workarea>
        <Dock />
        <Browser>
          <BrowserHead>
            <Backdrop><Smoke /></Backdrop>
            <Backdrop><BrushedMetal /></Backdrop>
            <HeadRows>
              <TabStrip>
                <TabSearch>
                  <svg width="10" height="7" viewBox="0 0 10 7" fill="none" stroke="#f4f000" strokeWidth="1.8"><path d="M1 1L5 5L9 1" /></svg>
                </TabSearch>
                <Tab>
                  <YouTubeIcon />
                  <TabTitle $width={148} $track={0.1}>(23) ALIYYI SABIT* WA</TabTitle>
                  <svg width="13" height="12" viewBox="0 0 13 12">
                    <path fill="#fff" d="M0 4H2.500L6.500 .5V11.500L2.500 8H0Z" />
                    <path d="M8.500 3.500Q10.300 6 8.500 8.500M9.300 .8Q14 6 9.300 11.200" stroke="#fff" strokeWidth="1.3" fill="none" />
                  </svg>
                  <TabClose><svg width="8" height="8" viewBox="0 0 8 8" stroke="#fff" strokeWidth="1.8"><path d="M.5 .5L7.500 7.500M7.500 .5L.5 7.500" /></svg></TabClose>
                </Tab>
                <ActiveTab>
                  <TabMark><svg width="9" height="8" viewBox="0 0 9 8"><path d="M4.500 .5L8.500 7H.5Z" fill="#fff" /></svg></TabMark>
                  Create Next App
                </ActiveTab>
                <WindowButtons>
                  <svg width="10" height="12" viewBox="0 0 10 12"><path d="M0 10H10" stroke="#eceef0" strokeWidth="2" /></svg>
                  <svg width="10" height="12" viewBox="0 0 10 12" fill="none" stroke="#eceef0" strokeWidth="2"><path d="M3 2H9V8H3Z" /><path d="M0 10H8" /></svg>
                  <svg width="10" height="12" viewBox="0 0 10 12" stroke="#eceef0" strokeWidth="2"><path d="M1 1.500L9 9.500M9 1.500L1 9.500" /></svg>
                </WindowButtons>
              </TabStrip>
              <BrowserToolbar />
              <BookmarkBar>
                {bookmarks.map((b, i) => (
                  <Bookmark key={i} $width={b.width} $icon={b.gutter} $track={b.track}>{b.icon}{b.name}</Bookmark>
                ))}
              </BookmarkBar>
            </HeadRows>
          </BrowserHead>
          <Viewport>
            <Page>
              <Article>
                <TaskList>
                  {tasks.map((lines, i) => (
                    <Task key={i}>
                      <CheckIcon />
                      <div>{lines.map(l => <Line key={l.text} $track={l.track}>{l.text}</Line>)}</div>
                    </Task>
                  ))}
                </TaskList>
                <Heading $top={58} $track={0.54}>Ideal Candidate</Heading>
                <Candidate>
                  <Bullet />
                  <p>
                    <Line $track={0.13}>The ideal candidate for the Volunteer Software Development Mentor role at A2SV possesses a blend of</Line>
                    <Line $track={0.17}>technical expertise, mentoring skills, and a passion for contributing to the development of the African</Line>
                    <Line $track={0.5}>tech community.</Line>
                  </p>
                </Candidate>
                <Heading $top={58} $track={0.15}>When &amp; Where</Heading>
                <Place><PinIcon /><Line $track={0.05}>Abrehot Library, Addis Ababa, Ethiopia</Line></Place>
              </Article>
              <Sidebar>
                <DateRow>
                  <CalendarIcon />
                  <div>
                    <Line $track={0.2}>End Date</Line>
                    <Strong $track={-0.34}>2006-01-02T15:04:05.999Z</Strong>
                  </div>
                </DateRow>
                <Heading $top={21} $track={0.24}>Categories</Heading>
                <Categories>
                  <Pill><Line $track={0.23}>Education Access and Quality</Line><Line $track={0.6}>Improvement</Line></Pill>
                  <Pill><Line $track={0.45}>Youth Empowerment and</Line><Line $track={0.46}>Development</Line></Pill>
                </Categories>
                <Heading $top={21} $track={0.12}>Requiered skill</Heading>
                <Skill><Line $track={0.45}>Accountant</Line></Skill>
              </Sidebar>
            </Page>
            <Scrollbar>
              <svg width="9" height="5" viewBox="0 0 9 5"><path d="M4.500 .5L8.500 4.500H.5Z" fill="#505050" /></svg>
              <Thumb />
              <svg width="9" height="5" viewBox="0 0 9 5"><path d="M4.500 4.500L8.500 .5H.5Z" fill="#9a9a9a" /></svg>
            </Scrollbar>
          </Viewport>
        </Browser>
      </Workarea>
      <Toast>
        <svg width="32" height="18" viewBox="0 0 32 18">
          <rect width="32" height="18" fill="#fff" />
          <path d="M0 0H32V3.500H2V18H0Z" fill="#111" />
          <path d="M0 2V17" stroke="#d8532c" strokeDasharray="1.5 2" />
          <path d="M3 7H22M3 11H4M3 14.500H15" stroke="#777" strokeDasharray="3 1.5" />
          <path d="M25 5.500H30M25 8H30" stroke="#4b7fd0" strokeDasharray="2 1" />
          <path d="M25 16H30" stroke="#9fe6b8" />
        </svg>
        <div>
          <ToastTitle>Screenshot captured</ToastTitle>
          <ToastText>You can paste the image from the clipboard.</ToastText>
        </div>
      </Toast>
    </Desktop>
  );
}
